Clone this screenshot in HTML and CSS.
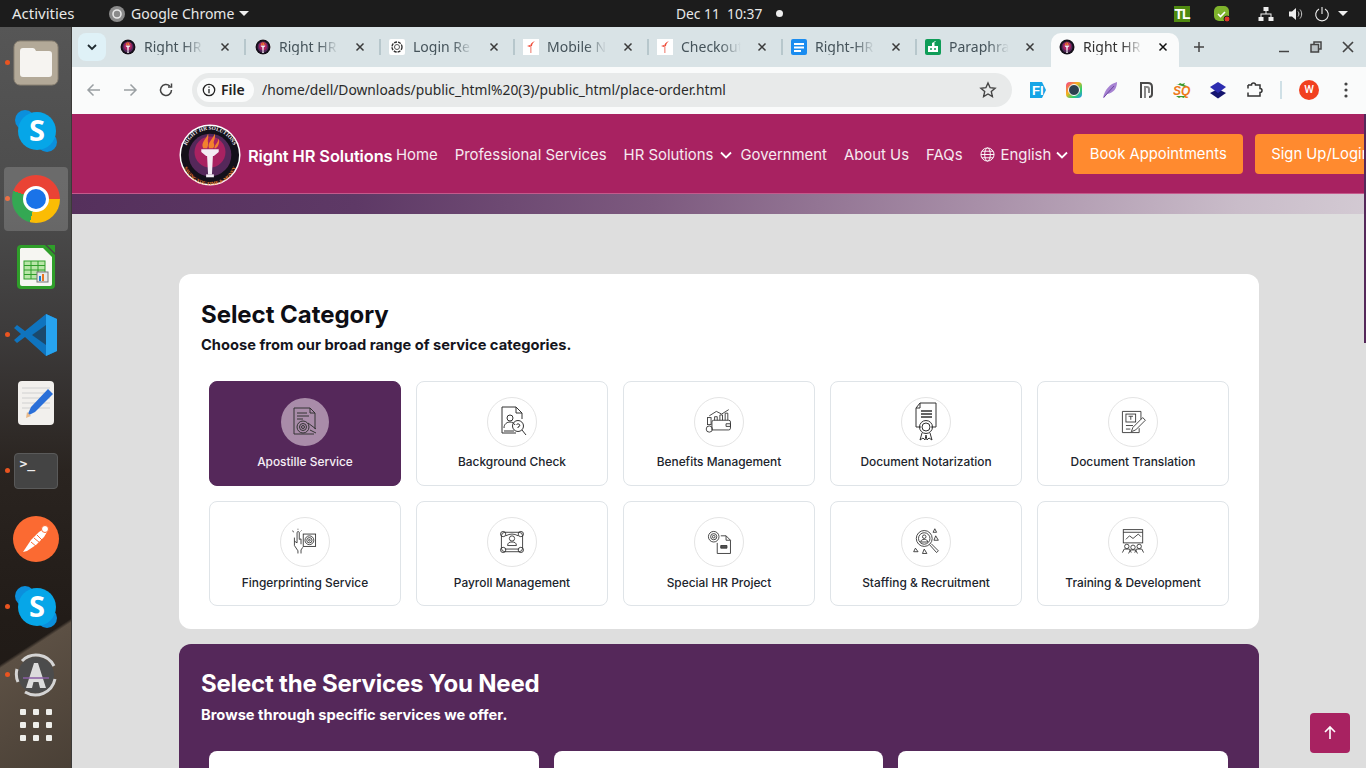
FILE: index.html
```html
<!DOCTYPE html>
<html lang="en">
<head>
<meta charset="UTF-8">
<title>Right HR Solutions</title>
<link rel="stylesheet" href="styles.css">
</head>
<body>
<svg class="defs" width="0" height="0">
<symbol id="torch" viewBox="0 0 64 64">
<circle cx="32" cy="32" r="31.500" fill="#fff"/>
<circle cx="32" cy="32" r="30" fill="#14101a"/>
<circle cx="32" cy="32" r="22" fill="#55285a"/>
<circle cx="32" cy="29" r="16" fill="#a82261"/>
<path d="M23 26h18v3l-5 4h-1l-1 19h-4l-1-19h-1l-5-4z" fill="#f4edf4"/>
<rect x="28" y="52" width="8" height="3" fill="#f4edf4"/>
<path d="M25 25c-3-6 3-9 5-15 1 4-1 6 0 9 0 2 0 4-1 6z" fill="#f2812e"/>
<path d="M31 25c-2-6 3-8 6-15 1 5-2 8-1 10 1 2 0 4-1 5z" fill="#f2812e"/>
<path d="M36.500 25c0-3 3.500-5 4.500-10 1 4 0 8-3 10z" fill="#f2812e"/>
</symbol>
<symbol id="flame-fav" viewBox="0 0 16 16">
<rect width="16" height="16" fill="#fff"/>
<path d="M7 8c0-3 2-5 5-6-2 2-3 3-3 5z" fill="#ee4b38"/>
<path d="M4 7l3-1v2z" fill="#ee4b38"/>
<rect x="7" y="8" width="1.600" height="6" fill="#f3a79e"/>
</symbol>
<symbol id="close" viewBox="0 0 10 10">
<path d="M1.500 1.500l7 7M8.500 1.500l-7 7" stroke="currentColor" stroke-width="1.500"/>
</symbol>
</svg>

<div class="topbar">
<span class="tb-activities">Activities</span>
<span class="tb-app">
<svg class="tb-chrome" width="16" height="16" viewBox="0 0 16 16"><circle cx="8" cy="8" r="8" fill="#8a8a8a"/><circle cx="8" cy="8" r="4" fill="none" stroke="#e8e8e8" stroke-width="1.600"/></svg>
Google Chrome<i class="tb-caret"></i>
</span>
<span class="tb-clock">Dec 11&nbsp; 10:37<i class="tb-dot"></i></span>
<span class="tb-tray">
<span class="tb-tl">TL</span>
<svg class="tb-check" width="18" height="18" viewBox="0 0 18 18"><rect x="1" y="1" width="15" height="15" rx="5" fill="#7fb32c"/><path d="M5 9l2.500 2.500L12 7" fill="none" stroke="#fff" stroke-width="1.600"/><circle cx="14" cy="14" r="3" fill="#e0352b" stroke="#1c1c1c"/></svg>
<svg class="tb-net" width="16" height="16" viewBox="0 0 16 16" fill="#eee"><rect x="5.500" y="1" width="5" height="4"/><rect x="0.500" y="11" width="5" height="4"/><rect x="10.500" y="11" width="5" height="4"/><path d="M7.500 5h1v2.500H13.500V11h-1V8.500h-9V11h-1V7.500h5z"/></svg>
<svg class="tb-snd" width="16" height="16" viewBox="0 0 16 16"><path d="M1 5.500h3L8 2v12L4 10.500H1z" fill="#eee"/><path d="M10 5.500c1.200 1.500 1.200 3.500 0 5M12 3.500c2.200 2.600 2.200 6.400 0 9" fill="none" stroke="#ccc"/></svg>
<svg class="tb-pow" width="16" height="16" viewBox="0 0 16 16" fill="none" stroke="#eee" stroke-width="1.100"><path d="M5 3a6.300 6.300 0 1 0 6 0M8 1v7"/></svg>
<i class="tb-caret"></i>
</span>
</div>

<div class="desk">
<aside class="dock">
<div class="slot run"><svg width="46" height="46" viewBox="0 0 46 46"><rect x="1" y="1" width="44" height="44" rx="6" fill="#b3a998" stroke="#8c8374"/><path d="M7 11q0-3 3-3h10q2 0 3 3h13q3 0 3 3v20q0 3-3 3H10q-3 0-3-3z" fill="#f6f4f1"/></svg></div>
<div class="slot"><svg width="44" height="44" viewBox="0 0 44 44"><circle cx="11" cy="11" r="10" fill="#0b8fdc"/><circle cx="33" cy="33" r="10" fill="#0b8fdc"/><circle cx="23" cy="22" r="19" fill="#06a6e8"/><text x="23" y="32" class="skype-s">S</text></svg></div>
<div class="slot run active"><div class="chrome-logo"><span></span></div></div>
<div class="slot"><svg width="40" height="46" viewBox="0 0 40 46"><path d="M5 1h24l10 10v30q0 4-4 4H5q-4 0-4-4V5q0-4 4-4z" fill="#2f9e2a"/><path d="M5 4h22l9 9v27q0 2-2 2H6q-2 0-2-2V5z" fill="#f6f6f2"/><path d="M31 1h8v8z" fill="#2f9e2a"/><rect x="8" y="17" width="21" height="18" fill="#b8e6a8" stroke="#2f9e2a"/><path d="M8 21.500h21M8 26h21M8 30.500h21M15 17v18M22 17v18" stroke="#2f9e2a"/><rect x="21" y="28" width="11" height="10" fill="#e8e8e8" stroke="#777"/><rect x="23" y="32" width="2" height="5" fill="#1b7fd0"/><rect x="26" y="30" width="2" height="7" fill="#e8751f"/></svg></div>
<div class="slot run"><svg width="44" height="44" viewBox="0 0 44 44"><path d="M32 1l11 5v32l-11 5L11 24 3 30l-3-3 7-6-7-6 3-3 8 6z" fill="#0f74bf"/><path d="M32 1l11 5v32l-11 5z" fill="#27a3ef"/><path d="M32 12v20L18 22z" fill="#26262a" opacity=".55"/></svg></div>
<div class="slot"><svg width="38" height="46" viewBox="0 0 38 46"><rect x="1" y="1" width="36" height="44" rx="4" fill="#f2f0ed"/><path d="M5 8h28M5 13h28M5 18h28M5 23h28M5 28h28" stroke="#d0d0d0"/><path d="M10 36l4-9 17-18 5 5-18 18z" fill="#2a6fd8"/><path d="M9 38l1-6 4 4z" fill="#e8b98a"/></svg></div>
<div class="slot run"><div class="term">&gt;_</div></div>
<div class="slot"><svg width="46" height="46" viewBox="0 0 46 46"><circle cx="23" cy="23" r="23" fill="#fb6a32"/><path d="M10 36l8-12 8-8 5-3 3 3-3 5-8 8-9 6z" fill="#fff"/><circle cx="32" cy="13" r="3.500" fill="#fff" stroke="#fb6a32"/><path d="M18 26l6 5M21 22l6 5M24 19l5 5" stroke="#fb6a32"/></svg></div>
<div class="slot run"><svg width="44" height="44" viewBox="0 0 44 44"><circle cx="11" cy="11" r="10" fill="#0b8fdc"/><circle cx="33" cy="33" r="10" fill="#0b8fdc"/><circle cx="23" cy="22" r="19" fill="#06a6e8"/><text x="23" y="32" class="skype-s">S</text></svg></div>
<div class="slot run"><svg width="46" height="46" viewBox="0 0 46 46"><circle cx="23" cy="23" r="18" fill="#4c4c4c"/><path d="M9 9a20 20 0 0 1 32 5M42 27A20 20 0 0 1 12 40M5 30a20 20 0 0 1-1-13" fill="none" stroke="#d4d4d4" stroke-width="3"/><path d="M13 36L21 11h4l8 25h-6l-1.500-6h-5L19 36z" fill="#dcdcdc"/><path d="M10 26h26" stroke="#8a5fa5" stroke-width="1.500"/></svg></div>
<div class="slot apps"><div class="apps-grid"><i></i><i></i><i></i><i></i><i></i><i></i><i></i><i></i><i></i></div></div>
</aside>

<div class="browser">
<div class="tabstrip">
<div class="tab-menu"><svg width="10" height="7" viewBox="0 0 10 7" fill="none" stroke="#1f2a30" stroke-width="1.800"><path d="M1 1l4 4 4-4"/></svg></div>
<div class="tab"><svg class="fav" width="16" height="16"><use href="#torch"/></svg><span class="tab-title">Right HR</span><svg class="tab-x" width="10" height="10"><use href="#close"/></svg></div>
<div class="tab"><svg class="fav" width="16" height="16"><use href="#torch"/></svg><span class="tab-title">Right HR</span><svg class="tab-x" width="10" height="10"><use href="#close"/></svg></div>
<div class="tab"><svg class="fav" width="16" height="16" viewBox="0 0 16 16"><rect width="16" height="16" rx="2" fill="#fff"/><circle cx="8" cy="8" r="5" fill="none" stroke="#333" stroke-width="1.400" stroke-dasharray="3 1"/><circle cx="8" cy="8" r="2.500" fill="none" stroke="#555"/></svg><span class="tab-title">Login Re</span><svg class="tab-x" width="10" height="10"><use href="#close"/></svg></div>
<div class="tab"><svg class="fav" width="16" height="16"><use href="#flame-fav"/></svg><span class="tab-title">Mobile N</span><svg class="tab-x" width="10" height="10"><use href="#close"/></svg></div>
<div class="tab"><svg class="fav" width="16" height="16"><use href="#flame-fav"/></svg><span class="tab-title">Checkout</span><svg class="tab-x" width="10" height="10"><use href="#close"/></svg></div>
<div class="tab"><svg class="fav" width="16" height="16" viewBox="0 0 16 16"><rect width="16" height="16" rx="2" fill="#1a8cf0"/><path d="M3 4h10v2H3zM3 7.500h10v2H3zM3 11h7v2H3z" fill="#fff"/></svg><span class="tab-title">Right-HR</span><svg class="tab-x" width="10" height="10"><use href="#close"/></svg></div>
<div class="tab"><svg class="fav" width="16" height="16" viewBox="0 0 16 16"><rect width="16" height="16" rx="2" fill="#0f9d58"/><path d="M3 7h10v6H3z" fill="#fff"/><circle cx="6" cy="10" r="1" fill="#0f9d58"/><circle cx="10" cy="10" r="1" fill="#0f9d58"/><path d="M8.500 4l2-2M7.500 7V4h1.500v3" fill="#fff" stroke="#fff"/></svg><span class="tab-title">Paraphra</span><svg class="tab-x" width="10" height="10"><use href="#close"/></svg></div>
<div class="tab tab-on"><svg class="fav" width="16" height="16"><use href="#torch"/></svg><span class="tab-title">Right HR</span><svg class="tab-x" width="10" height="10"><use href="#close"/></svg></div>
<svg class="tab-new" width="12" height="12" viewBox="0 0 12 12"><path d="M6 1v10M1 6h10" stroke="#444" stroke-width="1.500"/></svg>
<div class="win">
<svg width="12" height="12" viewBox="0 0 12 12"><path d="M1 10.500h10" stroke="#444" stroke-width="1.500"/></svg>
<svg width="12" height="12" viewBox="0 0 12 12" fill="none" stroke="#444" stroke-width="1.500"><path d="M4 3V1h7v7H9"/><rect x="1" y="3.500" width="7.500" height="7.500" fill="#444" fill-opacity=".2"/></svg>
<svg width="12" height="12" viewBox="0 0 12 12" stroke="#444" stroke-width="1.700"><path d="M1 1l10 10M11 1L1 11"/></svg>
</div>
</div>

<div class="toolbar">
<svg class="nav-ic" width="16" height="16" viewBox="0 0 16 16" fill="none" stroke="#9aa0a3" stroke-width="1.500"><path d="M14 8H2M7.500 2.500L2 8l5.500 5.500"/></svg>
<svg class="nav-ic" width="16" height="16" viewBox="0 0 16 16" fill="none" stroke="#9aa0a3" stroke-width="1.500"><path d="M2 8h12M8.500 2.500L14 8l-5.500 5.500"/></svg>
<svg class="nav-ic" width="16" height="16" viewBox="0 0 16 16" fill="none" stroke="#444" stroke-width="1.500"><path d="M13.500 8a5.500 5.500 0 1 1-1.700-4"/><path d="M13.500 1.500v3.500H10" /></svg>
<div class="omni">
<span class="chip"><svg width="14" height="14" viewBox="0 0 14 14" fill="none" stroke="#222" stroke-width="1.300"><circle cx="7" cy="7" r="5.700"/><path d="M7 6v4.200M7 3.500v1.300"/></svg>File</span>
<span class="url">/home/dell/Downloads/public_html%20(3)/public_html/place-order.html</span>
<svg class="star" width="18" height="18" viewBox="0 0 18 18" fill="none" stroke="#444" stroke-width="1.400"><path d="M9 2l2.100 4.700 5 .5-3.800 3.400 1.100 5L9 13l-4.400 2.600 1.100-5L1.900 7.200l5-.5z"/></svg>
</div>
<div class="exts">
<svg width="18" height="18" viewBox="0 0 18 18"><path d="M1 1h12l4 8-4 8H1z" fill="#16a5e6"/><text x="3" y="14" class="ext-fi">FI</text></svg>
<svg width="18" height="18" viewBox="0 0 18 18"><defs><linearGradient id="ring" x1="0" y1="0" x2="1" y2="1"><stop offset="0" stop-color="#f23a8c"/><stop offset=".4" stop-color="#f7b21c"/><stop offset=".7" stop-color="#2dd06e"/><stop offset="1" stop-color="#2a8cf0"/></linearGradient></defs><rect x="1" y="1" width="16" height="16" rx="4" fill="url(#ring)"/><circle cx="9" cy="9" r="5.500" fill="#2e4150" stroke="#fff"/></svg>
<svg width="18" height="18" viewBox="0 0 18 18"><path d="M2 17C4 8 9 3 16 1c0 6-3 11-10 12l-3 4z" fill="#a682d2"/><path d="M3 16L13 5" stroke="#6d46a0"/></svg>
<svg width="18" height="18" viewBox="0 0 18 18" fill="none" stroke="#4a4a4a" stroke-width="2"><path d="M4 17V2h7q4 0 4 4v7q0 3-3 3"/><path d="M8 17V6h2q2 0 2 2v4" stroke="#888"/></svg>
<svg width="18" height="18" viewBox="0 0 18 18"><path d="M3 3l2 1 2-2 2 1 3-1-1 2 3 1-2 1z" fill="#3d9a2e"/><text x="0" y="14" class="ext-sq">SQ</text><path d="M3 15l3 2 2-1 3 1 1-2z" fill="#3d9a2e"/></svg>
<svg width="18" height="18" viewBox="0 0 18 18"><path d="M9 8l8 4-8 5.500L1 12z" fill="#14146e"/><path d="M9 1l8 5-8 6-8-6z" fill="#2d2db0"/></svg>
<svg width="18" height="18" viewBox="0 0 18 18" fill="none" stroke="#333" stroke-width="1.500"><path d="M3 4h3.500a2 2 0 0 1 4 0H15v3.500a2 2 0 0 1 0 4V15H3v-3.500M3 7.500V4"/></svg>
<i class="ext-sep"></i>
<span class="avatar">W</span>
<svg class="kebab" width="4" height="16" viewBox="0 0 4 16" fill="#444"><circle cx="2" cy="2" r="1.600"/><circle cx="2" cy="8" r="1.600"/><circle cx="2" cy="14" r="1.600"/></svg>
</div>
</div>

<div class="page">
<header class="site-head">
<svg class="logo" width="62" height="62" viewBox="0 0 64 64">
<use href="#torch"/>
<defs><path id="arc-top" d="M6 32a26 26 0 0 1 52 0"/><path id="arc-bot" d="M3 34a29 29 0 0 0 58 0"/></defs>
<text class="logo-t"><textPath href="#arc-top" startOffset="50%">RIGHT HR SOLUTIONS</textPath></text>
<text class="logo-b"><textPath href="#arc-bot" startOffset="50%">SAVING YOU TIME &amp; MONEY</textPath></text>
</svg>
<span class="brand">Right HR Solutions</span>
<nav class="menu">
<a>Home</a>
<a>Professional Services</a>
<a>HR Solutions<svg class="chev chev-tight" width="12" height="8" viewBox="0 0 12 8"><path d="M1 1.500l5 5 5-5"/></svg></a>
<a>Government</a>
<a>About Us</a>
<a>FAQs</a>
<a class="lang"><svg width="15" height="15" viewBox="0 0 16 16" fill="none" stroke="#fff"><circle cx="8" cy="8" r="7"/><ellipse cx="8" cy="8" rx="3" ry="7"/><path d="M1 8h14M2 4.500h12M2 11.500h12"/></svg>English<svg class="chev" width="12" height="8" viewBox="0 0 12 8"><path d="M1 1.500l5 5 5-5"/></svg></a>
</nav>
<button class="btn-book">Book Appointments</button>
<button class="btn-book btn-sign">Sign Up/Login</button>
</header>
<div class="hero-edge"></div>

<main class="wrap">
<section class="panel">
<h2>Select Category</h2>
<p class="sub">Choose from our broad range of service categories.</p>
<div class="cat-grid">
<div class="cat cat-on">
<span class="cat-ic"><svg width="34" height="34" viewBox="0 0 34 34"><path d="M6 3h16l5 5v16M6 3v26h20" /><path d="M22 3v5h5M9 8h10M9 11h12M9 14h6"/><circle cx="15" cy="22" r="6"/><circle cx="15" cy="22" r="3.500"/><circle cx="15" cy="22" r="1.500"/><path d="M20 18l8 6M22 25l6 3"/></svg></span>
<span class="cat-name">Apostille Service</span>
</div>
<div class="cat">
<span class="cat-ic"><svg width="34" height="34" viewBox="0 0 34 34"><path d="M7 2h14l6 6v6M21 2v6h6M7 2v26h14"/><circle cx="15" cy="13" r="3"/><path d="M9 23c0-4 3-6 6-6 2 0 4 1 5 3M9 26h10"/><circle cx="23" cy="21" r="5.500"/><path d="M21.500 19.500q1.500-1.500 3 0t-1.500 2.500v1M27 25l4 5" /></svg></span>
<span class="cat-name">Background Check</span>
</div>
<div class="cat">
<span class="cat-ic"><svg width="30" height="30" viewBox="0 0 34 34"><path d="M9 26h19q2 0 2-2V17q0-2-2-2H11q-2 0-2 2z"/><path d="M25 19h5v3h-5z"/><rect x="4" y="12" width="4" height="8"/><circle cx="6" cy="25" r="3.500"/><path d="M12 15v-4h3v4M18 15V9h3v6M24 15V7h3v8M6 10l8-5 6 3 8-5"/></svg></span>
<span class="cat-name">Benefits Management</span>
</div>
<div class="cat">
<span class="cat-ic"><svg class="tall" width="24" height="40" viewBox="0 0 24 40"><path d="M6 1h16v24h-5M6 1L2 6v19h5M2 6h4V1"/><path d="M7 9h11M7 12h11M7 15h11" stroke-width="1.300"/><circle cx="12" cy="25" r="6.500"/><circle cx="12" cy="25" r="4"/><path d="M8 31l-2 7 3-2 2 2 1-5 1 5 2-2 3 2-2-7"/></svg></span>
<span class="cat-name">Document Notarization</span>
</div>
<div class="cat">
<span class="cat-ic"><svg width="30" height="30" viewBox="0 0 34 34"><path d="M26 14V5H5v24h19v-5"/><rect x="9" y="8" width="11" height="9"/><path d="M12 10.500h5M14.500 10.500v4M9 21h8M9 25h5"/><path d="M15 28l2-5 11-11 3 3-11 11z"/></svg></span>
<span class="cat-name">Document Translation</span>
</div>
<div class="cat">
<span class="cat-ic"><svg width="30" height="30" viewBox="0 0 34 34"><path d="M9 30v-3l-4-6V12M5 16l3 2V6q1-2 2.500 0v8M10.500 14l2-.5v6M12.500 30v-4l2-3"/><rect x="15" y="8" width="14" height="14"/><circle cx="22" cy="15" r="5"/><circle cx="22" cy="15" r="3"/><circle cx="22" cy="15" r="1"/><path d="M3 4l1 2M9 2v1M13 4l-1 1"/></svg></span>
<span class="cat-name">Fingerprinting Service</span>
</div>
<div class="cat">
<span class="cat-ic"><svg width="30" height="30" viewBox="0 0 34 34"><rect x="5" y="6" width="24" height="22" rx="4"/><circle cx="7" cy="8" r="3"/><circle cx="27" cy="8" r="3"/><circle cx="7" cy="26" r="3"/><circle cx="27" cy="26" r="3"/><circle cx="17" cy="13" r="3"/><path d="M12 21c0-3 2-4 5-4s5 1 5 4zM9 25h16M10 10q7-4 14 0"/></svg></span>
<span class="cat-name">Payroll Management</span>
</div>
<div class="cat">
<span class="cat-ic"><svg width="30" height="30" viewBox="0 0 34 34"><circle cx="11" cy="11" r="6"/><circle cx="11" cy="11" r="3.500"/><circle cx="11" cy="11" r="1.500"/><path d="M19 10h6l5 5v15H15V18"/><path d="M25 10v5h5"/><path d="M19 21h7v3h-7z" fill="#555"/></svg></span>
<span class="cat-name">Special HR Project</span>
</div>
<div class="cat">
<span class="cat-ic"><svg width="30" height="30" viewBox="0 0 34 34"><circle cx="15" cy="13" r="9"/><circle cx="15" cy="13" r="6.500"/><circle cx="15" cy="11" r="2"/><path d="M11 17c0-2 2-3 4-3s4 1 4 3zM21 20l8 9 2-2-8-8"/><path d="M27 2l-2 4h4zM28 10l-2 5h5zM5 24l-2 4h5zM15 25l-2 5h5z"/></svg></span>
<span class="cat-name">Staffing &amp; Recruitment</span>
</div>
<div class="cat">
<span class="cat-ic"><svg width="30" height="30" viewBox="0 0 34 34"><rect x="6" y="3" width="22" height="15"/><path d="M6 6h22M9 14l4-4 4 3 6-5 3 3"/><circle cx="10" cy="22" r="2.500"/><circle cx="17" cy="23" r="2.500"/><circle cx="24" cy="22" r="2.500"/><path d="M5 29l2-4h6l2 4M12 30l2-4h6l2 4M19 29l2-4h6l2 4"/></svg></span>
<span class="cat-name">Training &amp; Development</span>
</div>
</div>
</section>

<section class="panel-dark">
<h2>Select the Services You Need</h2>
<p class="sub">Browse through specific services we offer.</p>
<div class="svc-grid">
<div class="svc"></div>
<div class="svc"></div>
<div class="svc"></div>
</div>
</section>
</main>

<span class="page-scroll"></span>
<button class="to-top"><svg width="16" height="16" viewBox="0 0 16 16" fill="none" stroke="#fff" stroke-width="1.600"><path d="M8 14V2M3 7l5-5 5 5"/></svg></button>
</div>
</div>
</div>
</body>
</html>
```

FILE: styles.css
```css
/* Basic Reset */
*{margin:0;padding:0;box-sizing:border-box;}
html,body{width:1366px;height:768px;overflow:hidden;}
body{display:flex;flex-direction:column;background:#1c1c1c;font-family:"Noto Sans",sans-serif;}
.defs{position:absolute;}

/* ----- Ubuntu top bar ----- */
.topbar{height:27px;flex:none;display:flex;align-items:center;background:#1c1c1c;color:#e8e8e8;font-size:14px;}
.tb-activities{margin-left:12px;width:97px;font-size:15px;padding-bottom:2px;}
.tb-app{display:flex;align-items:center;width:567px;}
.tb-chrome{margin-right:6px;}
.tb-caret{display:inline-block;width:0;height:0;border-left:5px solid transparent;border-right:5px solid transparent;border-top:5px solid #eee;margin-left:5px;}
.tb-clock{display:flex;align-items:center;width:498px;font-size:13.800px;}
.tb-dot{width:7px;height:7px;border-radius:50%;background:#eee;margin-left:14px;}
.tb-tray{display:flex;align-items:center;}
.tb-tl{width:16px;height:16px;background:#4f8a10;color:#fff;font:700 14px/16px "Liberation Sans",sans-serif;text-align:center;letter-spacing:-1px;margin-right:23px;}
.tb-check{margin-right:27px;}
.tb-net{margin-right:14px;}
.tb-snd{margin-right:10px;}
.tb-pow{margin-right:4px;}
.tb-tray .tb-caret{margin-left:4px;}

.desk{flex:1;display:flex;min-height:0;}

/* ----- Dock ----- */
.dock{width:72px;flex:none;padding-top:2px;border-right:1px solid #3c3a38;background:linear-gradient(147deg,transparent 0,transparent 81%,#5c5044 81.500%,#4a4036 100%),linear-gradient(180deg,#565656 0,#4b4b4b 25%,#3c3a3a 42%,#2a2420 60%,#221c18 80%,#1d1814 100%);}
.slot{height:68px;display:flex;align-items:center;justify-content:center;position:relative;}
.slot.run::before{content:"";position:absolute;left:5px;top:31px;width:5px;height:5px;border-radius:50%;background:#e95420;}
.slot.active::after{content:"";position:absolute;left:4px;top:2px;width:64px;height:64px;border-radius:4px;background:rgba(255,255,255,.17);}
.skype-s{font:700 29px "Open Sans",sans-serif;fill:#fff;text-anchor:middle;}
.chrome-logo{width:48px;height:48px;border-radius:50%;position:relative;z-index:1;display:flex;align-items:center;justify-content:center;background:conic-gradient(#ea4335 0 90deg,#fbbc04 90deg 195deg,#34a853 195deg 290deg,#ea4335 290deg);}
.chrome-logo span{width:26px;height:26px;border-radius:50%;background:#1a73e8;border:3px solid #fff;}
.term{width:44px;height:36px;background:#444;border-radius:4px;border:1px solid #5a5a5a;color:#eee;font:700 13px/16px "DejaVu Sans Mono",monospace;padding:2px 5px;}
.apps{height:48px;margin-top:-8px;}
.apps-grid{display:grid;grid-template-columns:repeat(3,6px);grid-gap:7px;}
.apps-grid i{width:6px;height:6px;border-radius:1px;background:#eeeeea;}

/* ----- Chrome ----- */
.browser{flex:1;min-width:0;display:flex;flex-direction:column;}
.tabstrip{height:40px;flex:none;display:flex;background:#d9e3e6;padding:6px 0 0 6px;position:relative;}
.tab-menu{width:28px;height:28px;border-radius:8px;background:#dff1f7;display:flex;align-items:center;justify-content:center;margin-right:6px;}
.tab{width:134px;height:34px;flex:none;display:flex;align-items:flex-start;padding:5px 0 0 8px;position:relative;color:#45535a;}
.tab:nth-child(2){margin-right:1px;}
.tab::after{content:"";position:absolute;right:0;top:6px;width:2px;height:16px;background:#b7c7cc;}
.tab:nth-child(8)::after,.tab-on::after{display:none;}
.fav{flex:none;margin-top:1px;}
.tab-title{width:63px;margin-left:8px;white-space:nowrap;overflow:hidden;font-size:14px;line-height:17px;-webkit-mask-image:linear-gradient(90deg,#000 62%,transparent 95%);mask-image:linear-gradient(90deg,#000 62%,transparent 95%);}
.tab-x{flex:none;margin:4px 0 0 13px;color:#3a3a3a;}
.tab-on{width:128px;background:#fafbfb;border-radius:10px 10px 0 0;color:#333;}
.tab-on .tab-x{margin-left:12px;color:#111;}
.tab-new{flex:none;margin:8px 0 0 14px;}
.win{position:absolute;right:12px;top:14px;display:flex;gap:20px;}

.toolbar{height:47px;flex:none;display:flex;align-items:center;background:#fafbfb;padding:0 0 1px 14px;}
.nav-ic{margin-right:20px;}
.nav-ic:nth-child(3){margin-right:18px;}
.omni{width:820px;height:34px;flex:none;border-radius:17px;background:#e8eaea;display:flex;align-items:center;padding-left:5px;position:relative;}
.chip{display:flex;align-items:center;gap:5px;height:24px;width:57px;padding:0 0 1px 5px;border-radius:12px;background:#fafbfb;font-size:14px;font-weight:600;color:#222;}
.url{margin:-2px 0 0 8px;font-size:13.800px;color:#2a2a2a;white-space:nowrap;}
.star{position:absolute;right:15px;top:8px;}
.exts{display:flex;align-items:center;margin-left:17px;}
.exts>svg{margin-right:18px;flex:none;}
.exts>svg:nth-of-type(7){margin-right:17px;}
.ext-fi{font:700 13px "Liberation Sans",sans-serif;fill:#fff;}
.ext-sq{font:italic 700 12px "Liberation Sans",sans-serif;fill:#ee7a1a;}
.ext-sep{width:2px;height:18px;background:#cfe0e6;margin:0 17px 0 0;}
.avatar{width:20px;height:20px;border-radius:50%;background:#f1401f;color:#fff;font:500 11px/20px "Roboto",sans-serif;text-align:center;margin-right:25px;}
.exts>.kebab{margin:0;}

/* ----- Page ----- */
.page{flex:1;min-height:0;overflow:hidden;position:relative;background:#dedede;font-family:"Inter",sans-serif;}
.site-head{height:80px;display:flex;align-items:center;background:#a82261;border-bottom:1px solid #c45a8c;padding-left:107px;width:1400px;color:#fff;}
.logo{flex:none;margin-top:2px;}
.logo-t,.logo-b{font:700 5.500px "Liberation Serif",serif;text-anchor:middle;}
.logo-t{fill:#f4edf4;}
.logo-b{fill:#f2812e;font-size:4.800px;}
.brand{margin:4px 3px 0 7px;font-size:16.400px;font-weight:600;white-space:nowrap;width:145px;letter-spacing:-.1px;}
.menu{display:flex;align-items:center;gap:17px;margin-top:2px;}
.menu a{display:flex;align-items:center;font-size:14.900px;white-space:nowrap;color:#f6e9f0;}
.chev{fill:none;stroke:#fff;stroke-width:1.800;margin-left:5px;}
.chev-tight{margin:0 -9px 0 7px;}
.lang svg:first-child{margin-right:6px;}
.btn-book{flex:none;height:40px;width:170px;margin:0 0 0 5px;border:none;border-radius:4px;background:#ff8a2f;color:#fff;font:400 14.800px "Inter",sans-serif;}
.btn-sign{width:130px;margin-left:12px;text-align:left;padding-left:16px;white-space:nowrap;}
.hero-edge{height:20px;background:linear-gradient(100deg,#55305c 0,#5e3966 22%,#7d5a7f 45%,#a88fa8 70%,#c9bcc9 90%,#d3cad3 100%);}
.wrap{margin:60px 0 0 107px;width:1080px;}
.panel{height:355px;background:#fff;border-radius:12px;padding:26px 22px 0;}
.panel h2,.panel-dark h2{font-size:24px;font-weight:700;line-height:30px;letter-spacing:-.05px;color:#0e0e14;}
.sub{margin-top:6px;font-size:14.700px;font-weight:700;line-height:18px;color:#15151c;}
.cat-grid{display:grid;grid-template-columns:repeat(5,192px);grid-auto-rows:105px;gap:15px;margin:27px 0 0 8px;}
.cat{display:flex;flex-direction:column;align-items:center;border:1px solid #dfe4e8;border-radius:8px;padding-top:15px;}
.cat:nth-child(n+6) .cat-name{margin-top:8px;}
.cat-ic{width:50px;height:50px;flex:none;display:flex;align-items:center;justify-content:center;border:1px solid #e4e4e4;border-radius:50%;background:#fff;}
.cat-ic svg{fill:none;stroke:#333;stroke-width:1;}
.cat-name{margin-top:7px;font-size:11.900px;font-weight:500;line-height:16px;color:#20242c;white-space:nowrap;}
.cat-on{background:#55285a;border-color:#55285a;}
.cat-on .cat-ic{width:48px;height:48px;margin:1px;background:#a98ca9;border:none;}
.cat-on .cat-name{color:#f5eff5;}
.panel-dark{margin-top:15px;height:300px;background:#55285a;border-radius:12px;padding:25px 22px 0;color:#fff;}
.panel-dark h2{color:#fff;letter-spacing:-.2px;}
.panel-dark .sub{margin-top:7px;color:#fff;}
.svc-grid{display:grid;grid-template-columns:330px 329px 330px;gap:15px;margin:27px 0 0 8px;}
.svc{height:120px;background:#fff;border-radius:8px;}
.page-scroll{position:absolute;right:0;top:0;width:2px;height:229px;background:#55285a;}
.to-top{position:absolute;left:1238px;top:599px;width:40px;height:40px;border:none;border-radius:4px;background:#a82261;display:flex;align-items:center;justify-content:center;}
```
